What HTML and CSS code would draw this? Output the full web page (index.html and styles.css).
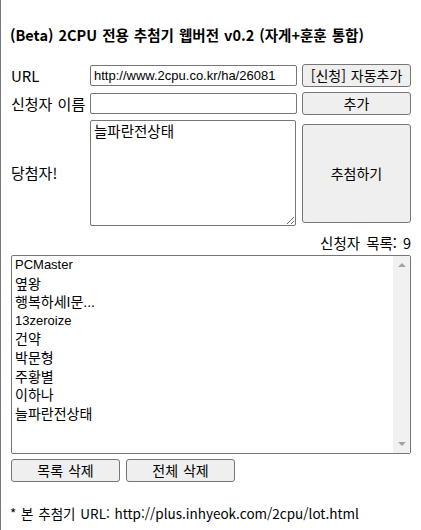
FILE: index.html
```html
<!DOCTYPE html>
<html lang="ko">
<head>
<meta charset="utf-8">
<title>2CPU 추첨기</title>
<link rel="stylesheet" href="styles.css">
</head>
<body>
<div class="page">
  <h1 class="title">(Beta) 2CPU 전용 추첨기 웹버전 v0.2 (자게+훈훈 통합)</h1>

  <div class="main">
    <div class="form">
      <label class="label">URL</label>
      <input class="field" type="text" value="http://www.2cpu.co.kr/ha/26081">
      <button class="btn">[신청] 자동추가</button>

      <label class="label">신청자 이름</label>
      <input class="field" type="text" value="">
      <button class="btn">추가</button>

      <label class="label">당첨자!</label>
      <textarea class="winner">늘파란전상태</textarea>
      <button class="btn btn-draw">추첨하기</button>
    </div>

    <div class="count">신청자 목록: 9</div>

    <div class="listbox">
      <ul class="items">
        <li>PCMaster</li>
        <li class="ko">옆왕</li>
        <li class="ko">행복하세I문...</li>
        <li>13zeroize</li>
        <li class="ko">건약</li>
        <li class="ko">박문형</li>
        <li class="ko">주황별</li>
        <li class="ko">이하나</li>
        <li class="ko">늘파란전상태</li>
      </ul>
      <div class="scrollbar">
        <span class="arrow arrow-up"></span>
        <span class="arrow arrow-down"></span>
      </div>
    </div>

    <div class="actions">
      <button class="btn btn-wide">목록 삭제</button>
      <button class="btn btn-wide">전체 삭제</button>
    </div>
  </div>

  <p class="footer">* 본 추첨기 URL: http://plus.inhyeok.com/2cpu/lot.html</p>
</div>
</body>
</html>
```

FILE: styles.css
```css
html, body {
  margin: 0;
  padding: 0;
  background: #ffffff;
}

.page {
  box-sizing: border-box;
  height: 530px;
  border-left: 1px solid #7a7a7a;
  padding: 25px 0 0 10px;
  font-family: "Noto Sans CJK KR", "Noto Sans", sans-serif;
  color: #000;
}

.title {
  margin: 0 0 0 -1px;
  font-size: 14.5px;
  font-weight: bold;
  line-height: 20px;
  word-spacing: 1px;
  white-space: nowrap;
}

.main {
  width: 400px;
  margin-top: 19px;
}

.form {
  display: grid;
  grid-template-columns: 74px 207px 109px;
  grid-template-rows: 23px 23px 106px;
  column-gap: 5px;
  row-gap: 5px;
  align-items: center;
}

.label {
  font-size: 15px;
  line-height: 20px;
  word-spacing: 1px;
  white-space: nowrap;
}

.field {
  box-sizing: border-box;
  width: 207px;
  height: 21px;
  margin: 0;
  padding: 0 3px;
  border: 1px solid #767676;
  border-radius: 2px;
  font-family: "Liberation Sans", "Noto Sans CJK KR", sans-serif;
  font-size: 13px;
  color: #000;
  background: #fff;
}

.winner {
  box-sizing: border-box;
  width: 206px;
  height: 106px;
  margin: 0;
  padding: 1px 3px;
  border: 1px solid #767676;
  border-radius: 2px;
  font-family: "Noto Sans CJK KR", sans-serif;
  font-size: 14.5px;
  line-height: 18px;
  color: #000;
  resize: both;
}

.btn {
  box-sizing: border-box;
  height: 23px;
  margin: 0;
  padding: 0;
  border: 1px solid #767676;
  border-radius: 3px;
  background: #efefef;
  font-family: "Noto Sans CJK KR", sans-serif;
  font-size: 14px;
  line-height: 19px;
  word-spacing: 1px;
  color: #000;
}

.btn-draw {
  height: 99px;
}

.count {
  margin-top: 7px;
  text-align: right;
  font-size: 14.5px;
  line-height: 20px;
  word-spacing: 2px;
}

.listbox {
  box-sizing: border-box;
  display: flex;
  width: 400px;
  height: 199px;
  margin-top: 2px;
  border: 1px solid #767676;
  border-radius: 2px;
  background: #fff;
}

.items {
  flex: 1;
  list-style: none;
  margin: 0;
  padding: 0 3px;
  font-family: "Liberation Sans", "Noto Sans CJK KR", sans-serif;
  font-size: 13px;
  line-height: 18.6px;
}

.items .ko {
  font-size: 14px;
}

.scrollbar {
  width: 17px;
  background: #f1f1f1;
  display: flex;
  flex-direction: column;
  justify-content: space-between;
  align-items: center;
  padding: 7px 0;
}

.arrow {
  width: 0;
  height: 0;
  border-left: 4px solid transparent;
  border-right: 4px solid transparent;
}

.arrow-up {
  border-bottom: 4px solid #a3a3a3;
}

.arrow-down {
  border-top: 4px solid #a3a3a3;
}

.actions {
  display: flex;
  gap: 6px;
  margin-top: 5px;
}

.btn-wide {
  width: 109px;
}

.footer {
  margin: 21px 0 0 -1px;
  font-size: 13.5px;
  line-height: 20px;
  word-spacing: 1px;
  white-space: nowrap;
}
```
